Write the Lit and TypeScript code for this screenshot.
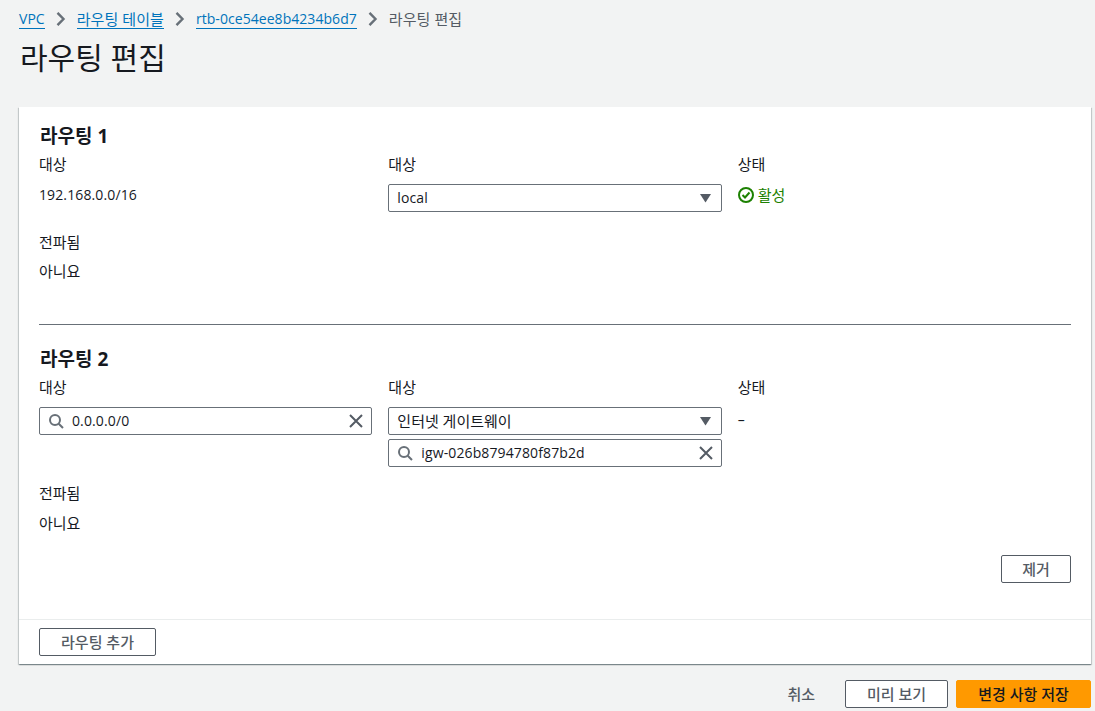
import { LitElement, html, css } from 'lit';
import { customElement } from 'lit/decorators.js';

const searchIcon = html`<svg class="ico" viewBox="0 0 16 16" width="16" height="16"><circle cx="7" cy="7" r="5" fill="none" stroke="#687078" stroke-width="2"/><path d="M10.7 10.7 15 15" stroke="#687078" stroke-width="2" fill="none"/></svg>`;
const clearIcon = html`<svg class="ico" viewBox="0 0 16 16" width="16" height="16"><path d="M3 2l12 12M15 2 3 14" stroke="#545b64" stroke-width="2" fill="none"/></svg>`;
const caret = html`<svg class="caret" viewBox="0 0 11 9" width="11" height="9"><path d="M0 0h11L5.5 8.5z" fill="#545b64"/></svg>`;

@customElement('app-root')
export class AppRoot extends LitElement {
  static styles = css`
    :host {
      display: block;
      height: 711px;
      overflow: hidden;
      background: #f2f3f3;
      color: #16191f;
      font-family: 'Open Sans', 'Noto Sans CJK KR', sans-serif;
      font-size: 15px;
      line-height: 20px;
    }
    .page {
      padding: 9px 4px 0 19px;
    }
    .crumbs {
      display: flex;
      align-items: center;
      height: 20px;
      letter-spacing: 0.07px;
    }
    .crumbs a {
      color: #0073bb;
      border-bottom: 1px solid #0073bb;
      line-height: 18px;
    }
    .crumbs svg {
      margin: 0 11px;
    }
    .crumbs .here {
      color: #545b64;
    }
    .latin {
      font-size: 14px;
      letter-spacing: 0.12px;
    }
    .crumbs .latin {
      letter-spacing: 0.05px;
    }
    h1 {
      margin: 11px 0 0 1px;
      font-size: 30px;
      line-height: 36px;
      font-weight: 400;
    }
    .card {
      margin-top: 31px;
      height: 557px;
      box-sizing: border-box;
      display: flex;
      flex-direction: column;
      background: #fff;
      box-shadow: 0 1px 1px 0 rgba(0, 28, 36, 0.3), 1px 1px 1px 0 rgba(0, 28, 36, 0.15), -1px 1px 1px 0 rgba(0, 28, 36, 0.15);
    }
    .body {
      flex: 1;
      padding: 17px 20px 0;
    }
    .route h2 {
      margin: 0 0 0 1px;
      font-size: 19px;
      line-height: 24px;
      font-weight: 700;
    }
    .grid {
      display: grid;
      grid-template-columns: repeat(3, 1fr);
      column-gap: 16px;
      margin-top: 5px;
    }
    .label {
      height: 22px;
      margin-bottom: 9px;
      line-height: 22px;
    }
    .value {
      line-height: 22px;
    }
    .dash {
      padding-top: 2px;
    }
    .status-ok {
      display: flex;
      align-items: center;
      gap: 4px;
      height: 22px;
      color: #1d8102;
    }
    .field {
      display: flex;
      align-items: center;
      box-sizing: border-box;
      height: 28px;
      margin-bottom: 4px;
      padding: 0 8px;
      background: #fff;
      border: 1px solid #687078;
      border-radius: 2px;
    }
    .field .text {
      flex: 1;
    }
    .field.search .text {
      padding-left: 8px;
    }
    .field .caret {
      margin-right: 2px;
    }
    .ico,
    .caret {
      flex: none;
    }
    .propagated {
      margin-top: 15px;
    }
    .route2 .propagated {
      margin-top: 11px;
    }
    .propagated .label {
      margin-bottom: 7px;
    }
    .route2 .propagated .label {
      margin-bottom: 8px;
    }
    hr {
      border: 0;
      border-top: 1px solid #687078;
      margin: 42px 0 22px;
    }
    .actions {
      display: flex;
      justify-content: flex-end;
      margin-top: 21px;
    }
    button {
      box-sizing: border-box;
      height: 28px;
      padding: 0;
      border: 1px solid #545b64;
      border-radius: 2px;
      background: #fff;
      color: #545b64;
      font: inherit;
      font-weight: 500;
    }
    .foot {
      height: 45px;
      box-sizing: border-box;
      padding: 8px 20px 0;
      border-top: 1px solid #eaeded;
    }
    .bottom {
      display: flex;
      justify-content: flex-end;
      align-items: center;
      margin-top: 16px;
    }
    .cancel {
      margin-right: 30px;
      color: #545b64;
      font-weight: 500;
    }
    .primary {
      width: 135px;
      margin-left: 8px;
      background: #ff9900;
      border-color: #ff9900;
      color: #16191f;
    }
    .w-remove {
      width: 70px;
    }
    .w-add {
      width: 117px;
    }
    .w-preview {
      width: 103px;
    }
  `;

  private chevron() {
    return html`<svg viewBox="0 0 10 14" width="10" height="14"><path d="M1.5 .8l6 6.2-6 6.2" fill="none" stroke="#687078" stroke-width="2.4"/></svg>`;
  }

  private propagated() {
    return html`<div class="propagated">
      <div class="label">전파됨</div>
      <div class="value">아니요</div>
    </div>`;
  }

  render() {
    return html`
      <div class="page">
        <nav class="crumbs">
          <a class="latin">VPC</a>${this.chevron()}
          <a>라우팅 테이블</a>${this.chevron()}
          <a class="latin">rtb-0ce54ee8b4234b6d7</a>${this.chevron()}
          <span class="here">라우팅 편집</span>
        </nav>
        <h1>라우팅 편집</h1>

        <section class="card">
          <div class="body">
            <div class="route">
              <h2>라우팅 1</h2>
              <div class="grid">
                <div>
                  <div class="label">대상</div>
                  <div class="value latin">192.168.0.0/16</div>
                </div>
                <div>
                  <div class="label">대상</div>
                  <div class="field"><span class="text latin">local</span>${caret}</div>
                </div>
                <div>
                  <div class="label">상태</div>
                  <div class="status-ok">
                    <svg viewBox="0 0 16 16" width="16" height="16"><circle cx="8" cy="8" r="7" fill="none" stroke="#1d8102" stroke-width="2"/><path d="M4.5 8l2.5 2.5 4.5-5" fill="none" stroke="#1d8102" stroke-width="2"/></svg>
                    <span>활성</span>
                  </div>
                </div>
              </div>
              ${this.propagated()}
            </div>
            <hr />
            <div class="route route2">
              <h2>라우팅 2</h2>
              <div class="grid">
                <div>
                  <div class="label">대상</div>
                  <div class="field search">${searchIcon}<span class="text latin">0.0.0.0/0</span>${clearIcon}</div>
                </div>
                <div>
                  <div class="label">대상</div>
                  <div class="field"><span class="text">인터넷 게이트웨이</span>${caret}</div>
                  <div class="field search">${searchIcon}<span class="text latin">igw-026b8794780f87b2d</span>${clearIcon}</div>
                </div>
                <div>
                  <div class="label">상태</div>
                  <div class="value latin dash">–</div>
                </div>
              </div>
              ${this.propagated()}
              <div class="actions"><button class="w-remove">제거</button></div>
            </div>
          </div>
          <div class="foot"><button class="w-add">라우팅 추가</button></div>
        </section>

        <div class="bottom">
          <span class="cancel">취소</span>
          <button class="w-preview">미리 보기</button>
          <button class="primary">변경 사항 저장</button>
        </div>
      </div>
    `;
  }
}
